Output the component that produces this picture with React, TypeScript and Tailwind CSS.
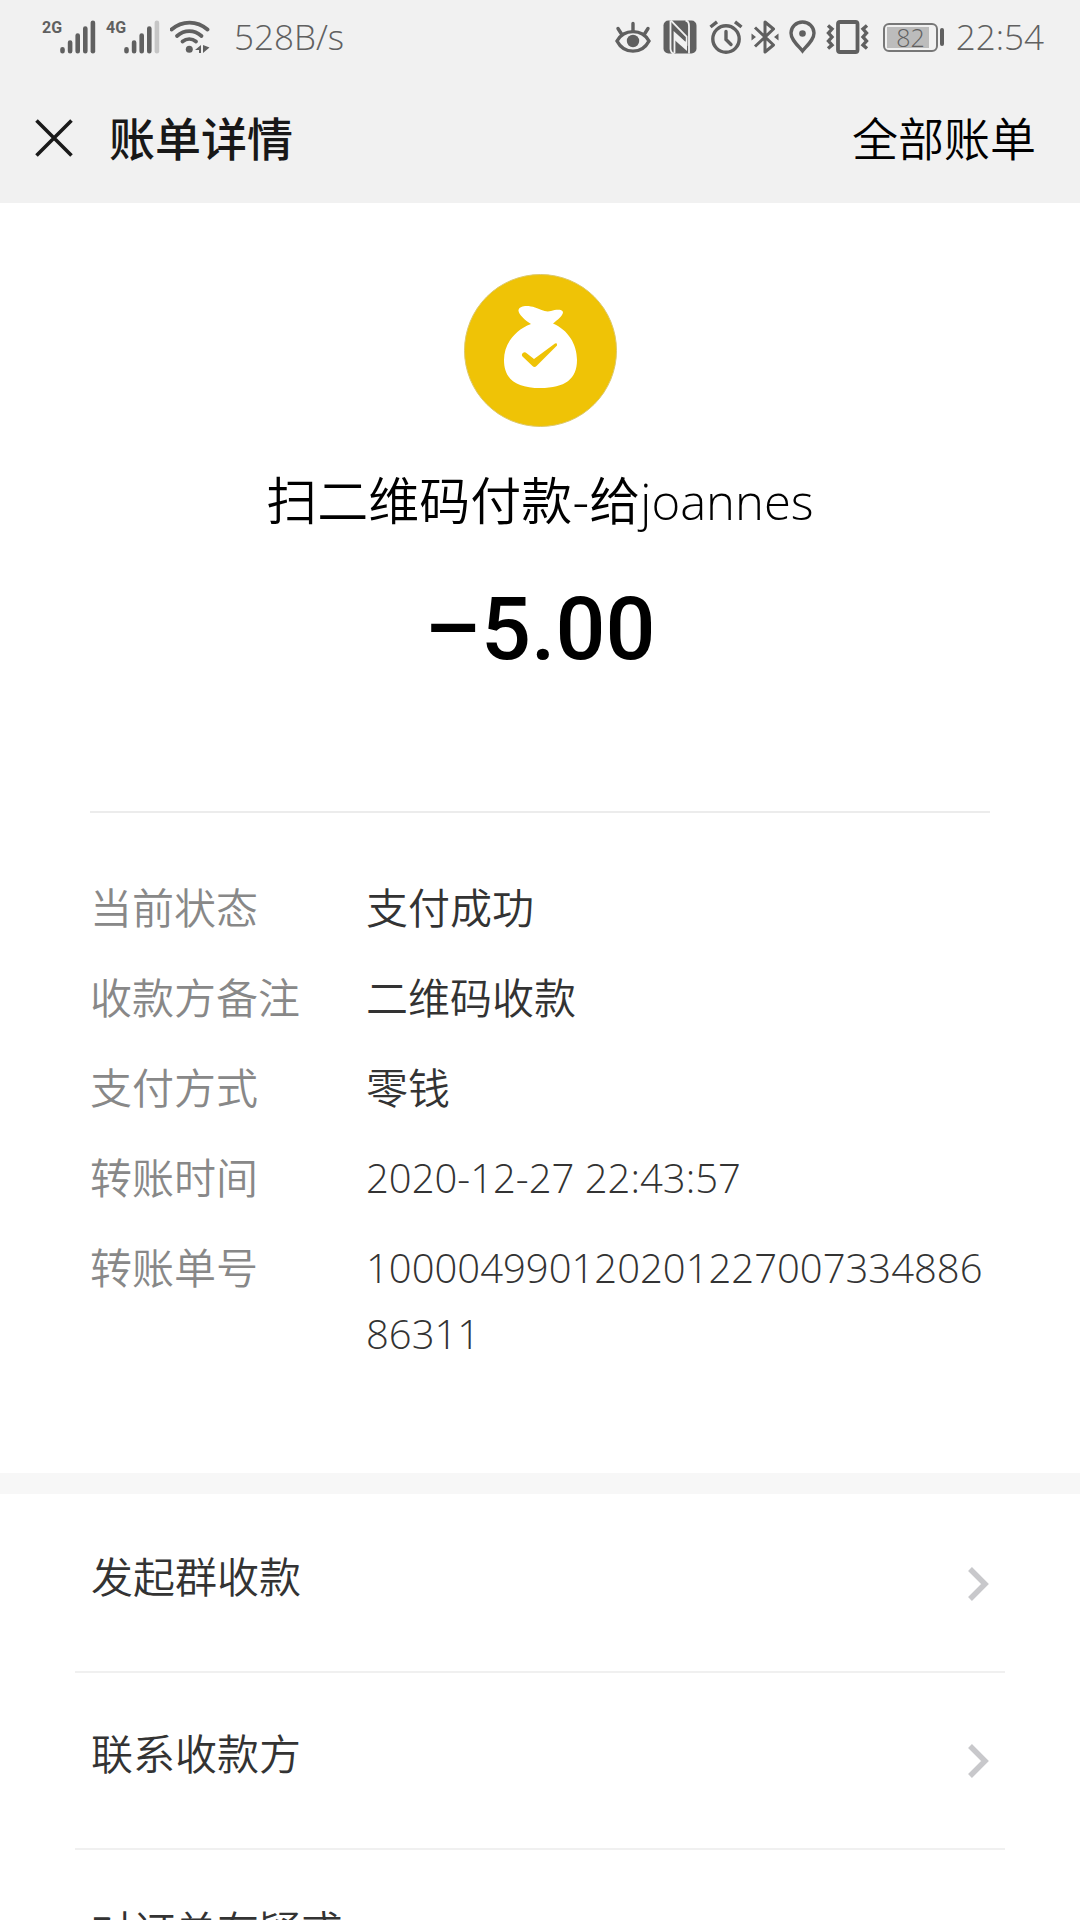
import React from "react";

type Detail = {
  label: string;
  value: string;
  numeric?: boolean;
};

const details: Detail[] = [
  { label: "当前状态", value: "支付成功" },
  { label: "收款方备注", value: "二维码收款" },
  { label: "支付方式", value: "零钱" },
  { label: "转账时间", value: "2020-12-27 22:43:57", numeric: true },
  { label: "转账单号", value: "10000499012020122700733488686311", numeric: true },
];

const actions = ["发起群收款", "联系收款方", "对订单有疑惑"];

function Signal({ label, weak }: { label: string; weak?: boolean }) {
  return (
    <div className="flex items-start">
      <span className="w-[18px] font-['Roboto',sans-serif] text-[16px] leading-4 font-bold">
        {label}
      </span>
      <svg width="36" height="34" viewBox="0 0 36 34" stroke="currentColor" strokeWidth="4.6" strokeLinecap="round">
        <path d="M2.5 29.2v2M10.1 22.5v8.7M17.7 15.5v15.7M25.3 8.5v22.7" />
        <path d="M32.9 2.7v28.5" className={weak ? "text-[#c6c6c6]" : ""} stroke="currentColor" />
      </svg>
    </div>
  );
}

function WifiIcon() {
  return (
    <svg width="40" height="34" viewBox="0 0 40 34" fill="none" stroke="currentColor" strokeWidth="3.8">
      <path d="M1.5 9.5C12 .2 27 .2 37.5 9.5" strokeLinecap="round" />
      <path d="M7 16C14.5 9.5 24 9.5 31.5 16" strokeLinecap="round" />
      <path d="M12.5 21.5C16.5 18.3 22 18.3 26 21.5" strokeLinecap="round" />
      <circle cx="19.3" cy="29.3" r="3.5" fill="currentColor" stroke="none" />
      <path d="M31 25v8h-2v-3h-4zM33 25v8l6.5-5.5z" fill="currentColor" stroke="none" />
    </svg>
  );
}

function EyeIcon() {
  return (
    <svg width="36" height="34" viewBox="0 0 36 34" fill="none" stroke="currentColor" strokeWidth="3.4">
      <path d="M2 21C9 8.5 27 8.5 34 21C27 34.5 9 34.5 2 21z" />
      <path d="M18 11V3.5M6.5 14 3 8.5M29.5 14 33 8.5" strokeLinecap="round" />
      <circle cx="18" cy="21" r="6.2" fill="currentColor" stroke="none" />
    </svg>
  );
}

function NfcIcon() {
  return (
    <svg width="34" height="34" viewBox="0 0 34 34">
      <rect x=".5" y=".5" width="33" height="33" rx="5" fill="currentColor" />
      <path d="M7.5 .5V29Q8 33.5 11.5 33.5" fill="none" stroke="#f1f1f1" strokeWidth="1.8" />
      <path d="M22.5 .5Q26 1 26 6V33.5" fill="none" stroke="#f1f1f1" strokeWidth="1.8" />
      <path d="M8 .5 23.5 16.5V24L11.5 13V33" fill="none" stroke="#f1f1f1" strokeWidth="1.8" />
      <path d="M11 12.5 24 24.5V31L11 19.5z" fill="#f1f1f1" />
      <path d="M12.5 12 22.5 21V17z" fill="currentColor" />
    </svg>
  );
}

function AlarmIcon() {
  return (
    <svg width="34" height="34" viewBox="0 0 34 34" fill="none" stroke="currentColor" strokeWidth="3.4">
      <circle cx="17" cy="19" r="13.2" />
      <path d="M17 11.5V19.5L22 24.5" strokeLinecap="round" />
      <path d="M1.5 7 8 1.8M32.5 7 26 1.8" />
    </svg>
  );
}

function BluetoothIcon() {
  return (
    <svg width="28" height="34" viewBox="0 0 28 34" fill="none" stroke="currentColor" strokeWidth="3">
      <path d="M4 7.5 22.5 25 14 32V2L22.5 9 4 26.5" strokeLinejoin="round" />
      <path d="M.5 13.5 5 17 .5 20.5zM27.5 13.5 23 17l4.5 3.5z" fill="currentColor" stroke="none" />
    </svg>
  );
}

function PinIcon() {
  return (
    <svg width="27" height="34" viewBox="0 0 27 34" fill="none" stroke="currentColor" strokeWidth="3.4">
      <path d="M13.5 31C8 24.5 2 19.5 2 13a11.5 11 0 0 1 23 0C25 19.5 19 24.5 13.5 31z" />
      <circle cx="13.5" cy="13.5" r="3.3" fill="currentColor" stroke="none" />
    </svg>
  );
}

function VibrateIcon() {
  return (
    <svg width="43" height="34" viewBox="0 0 43 34" fill="none" stroke="currentColor" strokeWidth="3.4">
      <rect x="12" y="2" width="19.5" height="30" rx="2" strokeWidth="3.8" />
      <path d="M2 5.5 6 9 2.5 13 6 17 2.5 21 6 25 2 28.5M41 5.5 37 9 40.5 13 37 17 40.5 21 37 25 41 28.5" />
    </svg>
  );
}

function Battery() {
  return (
    <div className="flex items-center gap-0.5">
      <div className="h-[29px] w-[55px] rounded-md border-2 border-[#777] p-0.5">
        <div className="flex h-full w-[42px] items-center justify-end bg-[#bcbcbc] pr-1 text-[25px] leading-none">
          82
        </div>
      </div>
      <div className="h-[18px] w-1 rounded-full bg-[#606060]" />
    </div>
  );
}

function MoneyBag() {
  return (
    <svg width="153" height="153" viewBox="0 0 153 153" className="mx-auto">
      <circle cx="76.5" cy="76.5" r="76" fill="#efc306" stroke="#dcc86c" />
      <path
        d="M67 50C61 46 54 40 54.5 36C56 31 65 31.5 71 33.5C77 35.5 81 38.5 87 37C92 35.5 98 35 99 38C99 42 93 46 89 49.5C104 56 113 70 113 86C113 105 101 114 76.5 114C52 114 40 105 40 86C40 70 51 56 67 50z"
        fill="#fff"
      />
      <path d="M58 80Q60 77 63 79.5L70 85L91 69.5Q93.5 68.5 93 71.5L72.5 92Q70.5 94 68.5 92L58.5 82.5Q57.5 81 58 80z" fill="#efc306" />
    </svg>
  );
}

export default function App() {
  return (
    <div className="h-screen overflow-hidden bg-white font-['Open_Sans','Noto_Sans_CJK_SC',sans-serif] font-[350] text-black">
      <header className="bg-[#f1f1f1]">
        <div className="flex h-[74px] items-center justify-between pr-9 pl-[42px] text-[#606060]">
          <div className="flex items-center gap-2.5">
            <Signal label="2G" />
            <Signal label="4G" weak />
            <WifiIcon />
            <span className="ml-3.5 text-[35px] leading-[48px]">528B/s</span>
          </div>
          <div className="flex items-center gap-3.5">
            <div className="flex gap-2">
              <div className="flex gap-3">
                <EyeIcon />
                <NfcIcon />
                <AlarmIcon />
              </div>
              <div className="flex gap-2.5">
                <BluetoothIcon />
                <PinIcon />
                <VibrateIcon />
              </div>
            </div>
            <div className="flex items-center gap-3">
              <Battery />
              <span className="text-[35px] leading-[48px]">22:54</span>
            </div>
          </div>
        </div>
        <div className="flex h-[129px] items-center justify-between pr-11 pb-0.5 pl-[35px] text-[46px] leading-[64px]">
          <div className="flex items-center gap-9">
            <button type="button" aria-label="关闭">
              <svg width="38" height="38" viewBox="0 0 38 38" stroke="#1a1a1a" strokeWidth="3.6">
                <path d="M1.5 1.5 36.5 36.5M36.5 1.5 1.5 36.5" />
              </svg>
            </button>
            <h1 className="font-medium text-[#181818]">账单详情</h1>
          </div>
          <a href="#all">全部账单</a>
        </div>
      </header>

      <main>
        <section className="px-[90px] pt-[71px] pb-[106px]">
          <MoneyBag />
          <h2 className="mt-[35px] text-center text-[51px] leading-[72px]">
            扫二维码付款<span className="font-['Noto_Sans_CJK_SC',sans-serif] font-light">-</span>给
            <span className="text-[49px]">joannes</span>
          </h2>
          <p className="mt-[38px] text-center font-['Roboto',sans-serif] text-[88px] leading-[108px] font-medium">
            –5.00
          </p>
          <dl className="mt-32 flex flex-col gap-6 border-t-2 border-[#ececec] pt-[62px] text-[42px] leading-[66px]">
            {details.map((detail) => (
              <div key={detail.label} className="flex">
                <dt className="w-[276px] shrink-0 text-[#888]">{detail.label}</dt>
                <dd
                  className={
                    detail.numeric
                      ? "text-[40px] break-all text-[#333]"
                      : "text-[#333]"
                  }
                >
                  {detail.value}
                </dd>
              </div>
            ))}
          </dl>
        </section>

        <div className="h-[21px] bg-[#f7f7f7]" />

        <nav className="px-[75px] pt-0.5 text-[42px] leading-[60px] text-[#333]">
          {actions.map((action) => (
            <a
              key={action}
              href="#action"
              className="flex h-[177px] items-center justify-between border-b-2 border-[#f0f0f0] px-4"
            >
              <span className="pb-3.5">{action}</span>
              <svg width="21" height="34" viewBox="0 0 21 34" fill="none" stroke="#c8c8cb" strokeWidth="5.5">
                <path d="M2 2 17 17 2 32" />
              </svg>
            </a>
          ))}
        </nav>
      </main>
    </div>
  );
}
